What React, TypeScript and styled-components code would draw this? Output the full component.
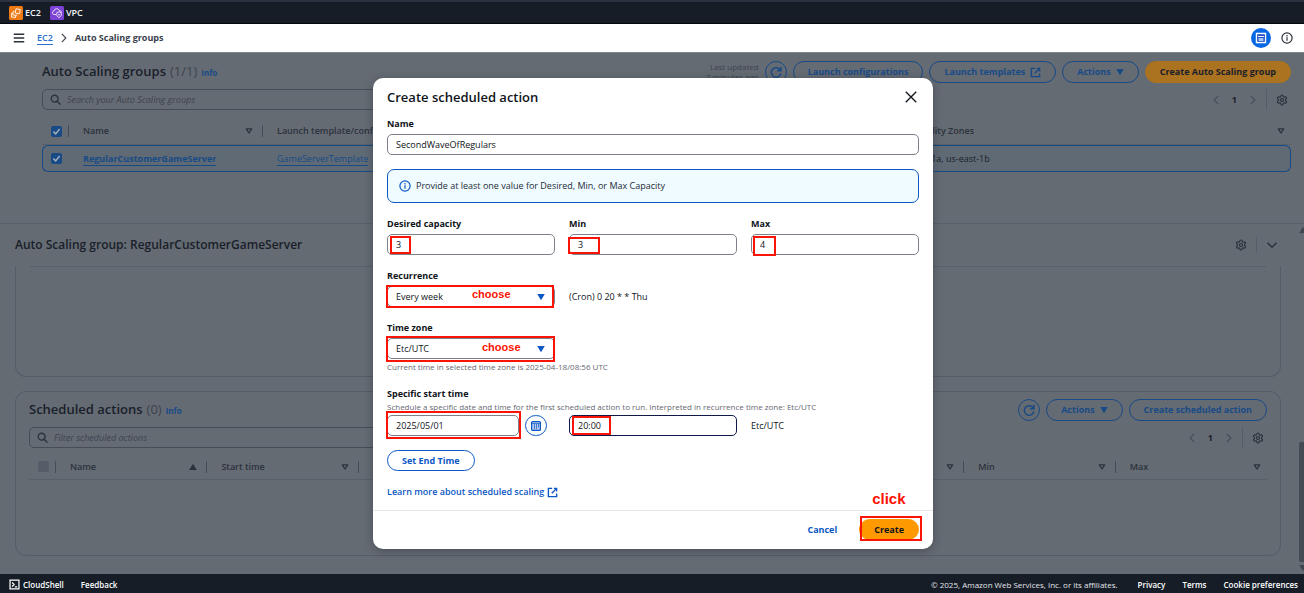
import React from "react";
import styled, { createGlobalStyle, css } from "styled-components";
import { Settings } from "lucide-react";

const dim = {
  surface: "#656b73",
  text: "#19202a",
  soft: "#2b323d",
  muted: "#3c434e",
  blue: "#184a86",
  orange: "#ab7220",
  border: "#464d58",
  line: "#596069",
  card: "#565c68",
};

const lit = {
  text: "#0f141a",
  muted: "#656871",
  blue: "#0b57c4",
  border: "#7d818b",
  line: "#e6e7ea",
  orange: "#ff9900",
  red: "#fa1405",
};

const GlobalStyle = createGlobalStyle`
  *, *::before, *::after { box-sizing: border-box; }
  body { margin: 0; background: ${dim.surface}; }
  body, button, input, select {
    font-family: "Open Sans", "Noto Sans", sans-serif;
    font-size: 9px;
    font-weight: 500;
    line-height: 14px;
    color: ${dim.text};
  }
  h1, h2, h3, p { margin: 0; font-weight: 500; }
  svg { display: block; flex: none; }
`;

/* ---------- page frame ---------- */

const Screen = styled.div`
  display: flex;
  flex-direction: column;
  min-height: 100vh;
`;

const ServiceBar = styled.header`
  display: flex;
  align-items: center;
  gap: 9px;
  height: 24px;
  padding: 0 9px;
  border-top: 2px solid #2a333f;
  border-bottom: 1px solid #05070b;
  background: #161d27;
`;

const ServiceLink = styled.a`
  display: flex;
  align-items: center;
  gap: 2px;
  color: #f3f3f7;
  font-weight: 600;
  text-decoration: none;
`;

const CrumbBar = styled.nav`
  display: flex;
  align-items: center;
  height: 28px;
  padding: 0 11px 0 13px;
  background: #fff;
`;

const Crumbs = styled.ol`
  display: flex;
  flex: 1;
  align-items: center;
  gap: 6px;
  margin: 0;
  padding: 0 0 0 12px;
  list-style: none;
  font-weight: 700;
  color: #3a414c;
  li { display: flex; align-items: center; }
  a {
    color: #2a6fd0;
    font-weight: 600;
    text-decoration: none;
    border-bottom: 1px solid #2a6fd0;
    line-height: 13px;
  }
`;

const IconButton = styled.button<{ $color?: string }>`
  display: flex;
  align-items: center;
  justify-content: center;
  padding: 0;
  border: 0;
  background: none;
  color: ${(p) => p.$color ?? dim.soft};
`;

const PanelToggle = styled(IconButton)`
  width: 20px;
  height: 20px;
  margin-right: 10px;
  border-radius: 50%;
  background: #0868e4;
`;

const Stage = styled.div`
  position: relative;
  display: flex;
  flex: 1;
  flex-direction: column;
  border-top: 1px solid #80858c;
  background: ${dim.surface};
`;

const FooterBar = styled.footer`
  display: flex;
  align-items: center;
  gap: 17px;
  height: 19px;
  padding: 2px 6px 0 9px;
  background: #161d27;
  color: #e4e6ea;
  font-size: 8px;
  a {
    display: flex;
    align-items: center;
    gap: 3px;
    color: #fff;
    font-weight: 600;
    text-decoration: none;
  }
  p { margin: 0 3px 0 auto; }
`;

/* ---------- dimmed page ---------- */

const Groups = styled.section`
  padding: 8px 13px 51px 42px;
`;

const HeadRow = styled.div`
  display: flex;
  align-items: center;
  gap: 6px;
  height: 22px;
`;

const Title = styled.h2`
  display: flex;
  align-items: baseline;
  gap: 4px;
  margin-right: auto;
  font-size: 13px;
  font-weight: 600;
  line-height: 20px;
  span { font-weight: 400; color: ${dim.muted}; }
  a {
    color: ${dim.blue};
    font-size: 8px;
    font-weight: 700;
    text-decoration: none;
  }
`;

const Updated = styled.p`
  color: ${dim.muted};
  font-size: 8px;
  line-height: 10px;
  text-align: right;
`;

const pill = css`
  display: flex;
  align-items: center;
  justify-content: center;
  gap: 5px;
  height: 22px;
  padding: 0 14px;
  border: 1px solid currentColor;
  border-radius: 11px;
  background: none;
  font-weight: 700;
  white-space: nowrap;
`;

const Pill = styled.button<{ $round?: boolean; $solid?: boolean }>`
  ${pill}
  color: ${dim.blue};
  ${(p) => p.$round && css`width: 22px; padding: 0;`}
  ${(p) => p.$solid && css`
    border-color: ${dim.orange};
    background: ${dim.orange};
    color: ${dim.text};
  `}
`;

const ToolRow = styled.div`
  display: flex;
  align-items: center;
  justify-content: space-between;
  height: 21px;
  margin-top: 6px;
`;

const Search = styled.label`
  display: flex;
  flex: 0 0 50%;
  align-items: center;
  gap: 6px;
  height: 21px;
  padding: 0 7px;
  border: 1px solid ${dim.border};
  border-radius: 5px;
  color: ${dim.soft};
  input {
    flex: 1;
    min-width: 0;
    padding: 0;
    border: 0;
    outline: 0;
    background: none;
  }
  input::placeholder {
    color: ${dim.muted};
    font-style: italic;
    opacity: 1;
  }
`;

const Pager = styled.div`
  display: flex;
  align-items: center;
  gap: 11px;
  padding-right: 3px;
  color: ${dim.border};
  b { font-weight: 700; color: ${dim.text}; }
`;

const PagerEnd = styled.div`
  display: flex;
  align-items: center;
  height: 21px;
  margin-left: -3px;
  padding-left: 9px;
  border-left: 1px solid ${dim.card};
`;

const Table = styled.table`
  width: 100%;
  margin-top: 6px;
  border-collapse: separate;
  border-spacing: 0;
  table-layout: fixed;
  th, td {
    padding: 0 9px 0 0;
    overflow: hidden;
    text-align: left;
    white-space: nowrap;
  }
  th {
    height: 26px;
    border-bottom: 1px solid ${dim.line};
    color: ${dim.soft};
    font-weight: 600;
  }
  td a { color: ${dim.blue}; border-bottom: 1px solid ${dim.blue}; text-decoration: none; }
`;

const GroupsTable = styled(Table)`
  margin-top: 8px;
  th { height: 27px; }
  td {
    height: 27px;
    padding-left: 14px;
    border-top: 1px solid ${dim.blue};
    border-bottom: 1px solid ${dim.blue};
    background: #606a75;
  }
  td:first-child {
    padding-left: 8px;
    border-left: 1px solid ${dim.blue};
    border-radius: 6px 0 0 6px;
  }
  td:last-child {
    border-right: 1px solid ${dim.blue};
    border-radius: 0 6px 6px 0;
  }
`;

const HeadCell = styled.div<{ $last?: boolean; $pick?: boolean }>`
  display: flex;
  align-items: center;
  justify-content: space-between;
  height: 12px;
  margin-right: -9px;
  padding: 0 9px 0 14px;
  border-right: 1px solid ${(p) => (p.$last ? "transparent" : dim.border)};
  ${(p) => p.$pick && css`padding: 0 0 0 9px;`}
  ${(p) => p.$last && css`padding-right: 5px;`}
`;

const Check = styled.input`
  appearance: none;
  display: block;
  width: 11px;
  height: 11px;
  margin: 0;
  border-radius: 2px;
  background: ${dim.card};
  &:checked {
    background: ${dim.blue};
  }
`;

const CheckWrap = styled.label`
  position: relative;
  display: block;
  width: 11px;
  svg { position: absolute; inset: 0; }
`;

const Split = styled.section`
  display: flex;
  flex: 1;
  border-top: 1px solid ${dim.line};
`;

const SplitBody = styled.div`
  display: flex;
  flex: 1;
  flex-direction: column;
  min-width: 0;
  padding: 0 18px 18px 15px;
`;

const SplitHead = styled.div`
  display: flex;
  align-items: center;
  gap: 9px;
  height: 42px;
  padding-right: 3px;
  h2 { flex: 1; font-size: 12px; font-weight: 600; line-height: 16px; }
`;

const Bar = styled.span`
  width: 1px;
  height: 16px;
  background: ${dim.card};
`;

const EmptyCard = styled.div`
  height: 111px;
  padding: 0 14px;
  border: 1px solid ${dim.card};
  border-top: 0;
  border-radius: 0 0 11px 11px;
  &::before { content: ""; display: block; border-bottom: 1px solid ${dim.line}; }
`;

const ActionsCard = styled.div`
  flex: 1;
  min-height: 120px;
  margin-top: 14px;
  padding: 7px 13px;
  border: 1px solid ${dim.card};
  border-radius: 11px;
`;

const ScrollTrack = styled.div`
  display: flex;
  flex-direction: column;
  justify-content: flex-end;
  gap: 2px;
  width: 5px;
  padding: 2px 0;
  color: #40464f;
  svg:first-child { margin-bottom: auto; }
`;

const ScrollThumb = styled.div`
  height: 120px;
  border-radius: 2px 0 0 2px;
  background: #454b54;
`;

/* ---------- dialog ---------- */

const DialogLayer = styled.div`
  position: absolute;
  inset: 0;
  display: flex;
  align-items: flex-start;
  justify-content: center;
  padding: 25px 0 0 2px;
`;

const Dialog = styled.div`
  width: 560px;
  border-radius: 10px;
  background: #fff;
  color: ${lit.text};
  box-shadow: 0 2px 10px rgba(20, 26, 36, 0.35);
  input, select { color: ${lit.text}; }
`;

const DialogHead = styled.div`
  display: flex;
  align-items: center;
  justify-content: space-between;
  padding: 11px 16px 0 14px;
  h1 { font-size: 13px; font-weight: 600; line-height: 16px; }
`;

const Form = styled.form`
  display: flex;
  flex-direction: column;
  gap: 14px;
  padding: 12px 14px 11px;
`;

const Columns = styled.div`
  display: grid;
  grid-template-columns: repeat(3, 1fr);
  gap: 14px;
`;

const Label = styled.label`
  display: block;
  margin-bottom: 3px;
  font-weight: 700;
`;

const Hint = styled.p`
  padding-top: 2px;
  color: ${lit.muted};
  font-size: 8px;
  line-height: 12px;
`;

const ZoneHint = styled(Hint)`
  margin-top: -14px;
`;

const StartHead = styled.div`
  label { margin: 0; }
  p { padding: 0 0 2px; }
`;

const Control = styled.div`
  position: relative;
`;

const box = css`
  display: block;
  width: 100%;
  height: 21px;
  padding: 0 8px;
  border: 1px solid ${lit.border};
  border-radius: 5px;
  outline: 0;
  background: #fff;
`;

const Input = styled.input<{ $active?: boolean }>`
  ${box}
  ${(p) => p.$active && css`border-color: #10194a;`}
`;

const Select = styled.select`
  ${box}
  appearance: none;
  & + svg {
    position: absolute;
    top: 7px;
    right: 10px;
    color: ${lit.blue};
  }
`;

const Side = styled.span`
  align-self: end;
  padding-bottom: 3px;
`;

const DateRow = styled.div`
  display: grid;
  grid-template-columns: 1fr 22px;
  gap: 6px;
  padding-right: 8px;
`;

const Notice = styled.div`
  display: flex;
  align-items: center;
  gap: 5px;
  height: 34px;
  padding: 0 11px;
  border: 1px solid ${lit.blue};
  border-radius: 7px;
  background: #f0fbff;
  color: #232b37;
  svg { color: ${lit.blue}; }
`;

const DialogButton = styled.button<{ $kind?: "primary" | "link" }>`
  ${pill}
  height: 21px;
  color: ${lit.blue};
  ${(p) => p.$kind === "link" && css`border-color: transparent;`}
  ${(p) => p.$kind === "primary" && css`
    border-color: ${lit.orange};
    background: ${lit.orange};
    color: ${lit.text};
  `}
`;

const RoundButton = styled(DialogButton)`
  width: 22px;
  padding: 0;
`;

const FormLine = styled.div`
  display: flex;
  a {
    display: flex;
    align-items: center;
    gap: 3px;
    color: ${lit.blue};
    font-weight: 600;
    text-decoration: none;
  }
`;

const DialogFoot = styled.div`
  display: flex;
  justify-content: flex-end;
  gap: 7px;
  padding: 8px 14px 9px;
  border-top: 1px solid ${lit.line};
`;

/* ---------- red tutorial marks ---------- */

const Mark = styled.span<{ $t: number; $l: number; $w: number; $h: number }>`
  position: absolute;
  top: ${(p) => p.$t}px;
  left: ${(p) => p.$l}px;
  width: ${(p) => p.$w}px;
  height: ${(p) => p.$h}px;
  border: 2px solid ${lit.red};
  pointer-events: none;
`;

const Note = styled.span<{ $t: number; $l: number; $size?: number }>`
  position: absolute;
  top: ${(p) => p.$t}px;
  left: ${(p) => p.$l}px;
  color: ${lit.red};
  font: 700 ${(p) => p.$size ?? 11}px/14px "Liberation Sans", Arial, sans-serif;
  pointer-events: none;
`;

/* ---------- icons ---------- */

const Line = ({ d, size = 11, w = 2, color = "currentColor" }: { d: string; size?: number; w?: number; color?: string }) => (
  <svg width={size} height={size} viewBox="0 0 16 16" fill="none" stroke={color} strokeWidth={w} aria-hidden="true">
    <path d={d} />
  </svg>
);

const External = () => <Line d="M10 2h4v4.5M7 9l7-7M7.5 2H2v12h12V9.5" />;
const Refresh = () => <Line size={12} d="M14.6 1v5.2H9.4M13.9 5.8A6.4 6.4 0 1 0 14.4 10" />;
const SearchIcon = () => <Line size={11} d="M11.8 6.8a5 5 0 1 1-10 0 5 5 0 0 1 10 0ZM10.4 10.4l4.8 4.8" />;
const Left = () => <Line size={10} w={1.8} d="M11.5 1.5 5 8l6.5 6.5" />;
const Right = () => <Line size={10} w={1.8} d="M4.5 1.5 11 8l-6.5 6.5" />;
const Info = () => <Line size={12} d="M14.8 8a6.8 6.8 0 1 1-13.6 0 6.8 6.8 0 0 1 13.6 0ZM8 7v4.800M8 4v1.900" w={1.6} />;

const Tri = ({ up, hollow }: { up?: boolean; hollow?: boolean }) => (
  <svg width="8" height="8" viewBox="0 0 8 8" aria-hidden="true">
    <path
      d={hollow ? "M1.3 1.9h5.4L4 6Z" : up ? "M4 .8 7.8 7H.2Z" : "M.2 1h7.6L4 7.2Z"}
      fill={hollow ? "none" : "currentColor"}
      stroke={hollow ? "currentColor" : "none"}
      strokeWidth="1.2"
      strokeLinejoin="round"
    />
  </svg>
);

const Ec2Logo = () => (
  <svg width="14" height="14" viewBox="0 0 28 28" aria-hidden="true">
    <rect width="28" height="28" rx="3" fill="#ed7a14" />
    <g fill="none" stroke="#fff" strokeWidth="1.800" strokeLinejoin="round">
      <path d="M14 5.500l8.500 1.500-1.500 8.500-8.500-1.500zM11 11l-2.500-.3-1 7 7.500 1.300.6-2M7.800 14.500l-2.300-.2L5 22l8 1 .4-3.500" />
    </g>
  </svg>
);

const VpcLogo = () => (
  <svg width="14" height="14" viewBox="0 0 28 28" aria-hidden="true">
    <rect width="28" height="28" rx="3" fill="#7d43d8" />
    <g fill="none" stroke="#fff" strokeWidth="1.7" strokeLinejoin="round">
      <path d="M12 17H8.5C6.3 17 5 15.500 5 13.500s1.400-3.400 3.200-3.500C8.600 7.200 10.800 5.500 13.500 5.500c2.600 0 4.300 1.500 5 3.600 2.300-.1 3.900 1.300 4 3.400" />
      <path d="m18 11.500 4.500 1.800v4c0 2.600-1.800 4.400-4.500 5.700-2.700-1.300-4.500-3.100-4.500-5.700v-4ZM16 17.500h4" />
    </g>
  </svg>
);

const PanelIcon = () => (
  <svg width="12" height="12" viewBox="0 0 12 12" aria-hidden="true">
    <path d="M1.500 1.500h9v9h-9z" fill="#0b3fc0" stroke="#fff" strokeWidth="1.400" />
    <path d="M3 4.500h6" stroke="#fff" strokeWidth="1.200" />
    <path d="M3.500 6h5v3h-5z" fill="#a9c6f7" />
  </svg>
);

const CalendarIcon = () => (
  <svg width="10" height="10" viewBox="0 0 10 10" aria-hidden="true">
    <rect x=".6" y=".6" width="8.800" height="8.800" rx="1" fill="#b9caf0" stroke="currentColor" strokeWidth="1.200" />
    <path d="M1 2.500h8M3.500 3v5M5.500 3v5M7.500 3v3.500" stroke="currentColor" strokeWidth=".7" />
  </svg>
);

const Gear = () => <Settings size={12} strokeWidth={2.4} aria-hidden="true" />;

const Tick = () => <Line size={11} w={2.2} color="#a4adb8" d="M3.5 8.2 6.8 11.5 12.5 4.5" />;

/* ---------- composed parts ---------- */

const PagerBlock = () => (
  <Pager>
    <IconButton $color={dim.border} aria-label="Previous page"><Left /></IconButton>
    <b>1</b>
    <IconButton $color={dim.border} aria-label="Next page"><Right /></IconButton>
    <PagerEnd>
      <IconButton aria-label="Preferences"><Gear /></IconButton>
    </PagerEnd>
  </Pager>
);

const PickBox = ({ label, on }: { label: string; on?: boolean }) => (
  <CheckWrap>
    <Check type="checkbox" aria-label={label} defaultChecked={on} disabled={!on} />
    {on && <Tick />}
  </CheckWrap>
);

const groupColumns: [string, number | undefined][] = [
  ["Name", 194],
  ["Launch template/configuration", 194],
  ["Instances", 90],
  ["Status", 80],
  ["Desired capacity", 121],
  ["Min", 68],
  ["Max", 68],
  ["Availability Zones", undefined],
];

const actionColumns = ["Name", "Start time", "End time", "Recurrence", "Time zone", "Desired capacity", "Min", "Max"];

const AutoScalingGroups = () => (
  <Groups>
    <HeadRow>
      <Title>Auto Scaling groups <span>(1/1)</span> <a href="#info">Info</a></Title>
      <Updated>Last updated<br />2 minutes ago</Updated>
      <Pill $round aria-label="Refresh"><Refresh /></Pill>
      <Pill>Launch configurations</Pill>
      <Pill>Launch templates <External /></Pill>
      <Pill>Actions <Tri /></Pill>
      <Pill $solid>Create Auto Scaling group</Pill>
    </HeadRow>
    <ToolRow>
      <Search>
        <SearchIcon />
        <input type="search" placeholder="Search your Auto Scaling groups" aria-label="Search your Auto Scaling groups" />
      </Search>
      <PagerBlock />
    </ToolRow>
    <GroupsTable>
      <colgroup>
        <col width={27} />
        {groupColumns.map(([name, width]) => <col key={name} width={width} />)}
      </colgroup>
      <thead>
        <tr>
          <th><HeadCell $pick><PickBox label="Select all groups" on /></HeadCell></th>
          {groupColumns.map(([name], i) => (
            <th key={name}>
              <HeadCell $last={i === groupColumns.length - 1}>{name}<Tri hollow /></HeadCell>
            </th>
          ))}
        </tr>
      </thead>
      <tbody>
        <tr>
          <td><PickBox label="Select RegularCustomerGameServer" on /></td>
          <td><a href="#group"><b>RegularCustomerGameServer</b></a></td>
          <td><a href="#template">GameServerTemplate</a></td>
          <td />
          <td />
          <td />
          <td />
          <td />
          <td>us-east-1a, us-east-1b</td>
        </tr>
      </tbody>
    </GroupsTable>
  </Groups>
);

const GroupDetails = () => (
  <Split>
    <SplitBody>
      <SplitHead>
        <h2>Auto Scaling group: RegularCustomerGameServer</h2>
        <IconButton aria-label="Panel preferences"><Gear /></IconButton>
        <Bar />
        <IconButton aria-label="Collapse panel"><Line size={12} d="M2 5l6 6 6-6" /></IconButton>
      </SplitHead>
      <EmptyCard />
      <ActionsCard>
        <HeadRow>
          <Title>Scheduled actions <span>(0)</span> <a href="#info">Info</a></Title>
          <Pill $round aria-label="Refresh scheduled actions"><Refresh /></Pill>
          <Pill>Actions <Tri /></Pill>
          <Pill>Create scheduled action</Pill>
        </HeadRow>
        <ToolRow>
          <Search>
            <SearchIcon />
            <input type="search" placeholder="Filter scheduled actions" aria-label="Filter scheduled actions" />
          </Search>
          <PagerBlock />
        </ToolRow>
        <Table>
          <colgroup>
            <col width={27} />
            {actionColumns.map((name) => <col key={name} />)}
          </colgroup>
          <thead>
            <tr>
              <th><HeadCell $pick><PickBox label="Select all actions" /></HeadCell></th>
              {actionColumns.map((name, i) => (
                <th key={name}>
                  <HeadCell $last={i === actionColumns.length - 1}>{name}<Tri up={i === 0} hollow={i > 0} /></HeadCell>
                </th>
              ))}
            </tr>
          </thead>
        </Table>
      </ActionsCard>
    </SplitBody>
    <ScrollTrack>
      <Tri up />
      <ScrollThumb />
      <Tri />
    </ScrollTrack>
  </Split>
);

const ScheduledActionDialog = () => (
  <DialogLayer>
    <Dialog role="dialog" aria-labelledby="dialog-title">
      <DialogHead>
        <h1 id="dialog-title">Create scheduled action</h1>
        <IconButton $color={lit.text} aria-label="Close"><Line size={12} w={1.8} d="M1 1l14 14M15 1 1 15" /></IconButton>
      </DialogHead>
      <Form onSubmit={(e) => e.preventDefault()}>
        <div>
          <Label htmlFor="name">Name</Label>
          <Input id="name" defaultValue="SecondWaveOfRegulars" />
        </div>
        <Notice><Info />Provide at least one value for Desired, Min, or Max Capacity</Notice>
        <Columns>
          <div>
            <Label htmlFor="desired">Desired capacity</Label>
            <Control>
              <Input id="desired" defaultValue="3" />
              <Mark $t={2} $l={3} $w={21} $h={18} />
            </Control>
          </div>
          <div>
            <Label htmlFor="min">Min</Label>
            <Control>
              <Input id="min" defaultValue="3" />
              <Mark $t={3} $l={-1} $w={32} $h={17} />
            </Control>
          </div>
          <div>
            <Label htmlFor="max">Max</Label>
            <Control>
              <Input id="max" defaultValue="4" />
              <Mark $t={2} $l={2} $w={23} $h={20} />
            </Control>
          </div>
        </Columns>
        <Columns>
          <div>
            <Label htmlFor="recurrence">Recurrence</Label>
            <Control>
              <Select id="recurrence"><option>Every week</option></Select>
              <Tri />
              <Mark $t={-1} $l={-1} $w={168} $h={23} />
              <Note $t={1} $l={85}>choose</Note>
            </Control>
          </div>
          <Side>(Cron) 0 20 * * Thu</Side>
        </Columns>
        <Columns>
          <div>
            <Label htmlFor="zone">Time zone</Label>
            <Control>
              <Select id="zone"><option>Etc/UTC</option></Select>
              <Tri />
              <Mark $t={-2} $l={-1} $w={169} $h={26} />
              <Note $t={2} $l={95}>choose</Note>
            </Control>
          </div>
        </Columns>
        <ZoneHint>Current time in selected time zone is 2025-04-18/08:56 UTC</ZoneHint>
        <div>
          <StartHead>
            <Label htmlFor="date">Specific start time</Label>
            <Hint>Schedule a specific date and time for the first scheduled action to run. Interpreted in recurrence time zone: Etc/UTC</Hint>
          </StartHead>
          <Columns>
            <DateRow>
              <Control>
                <Input id="date" defaultValue="2025/05/01" />
                <Mark $t={-4} $l={-1} $w={135} $h={28} />
              </Control>
              <RoundButton type="button" aria-label="Choose date"><CalendarIcon /></RoundButton>
            </DateRow>
            <Control>
              <Input id="time" aria-label="Start time" $active defaultValue="20:00" />
              <Mark $t={1} $l={3} $w={39} $h={19} />
            </Control>
            <Side>Etc/UTC</Side>
          </Columns>
        </div>
        <FormLine><DialogButton type="button">Set End Time</DialogButton></FormLine>
        <FormLine><a href="#scaling">Learn more about scheduled scaling <External /></a></FormLine>
      </Form>
      <DialogFoot>
        <DialogButton $kind="link">Cancel</DialogButton>
        <Control>
          <DialogButton $kind="primary">Create</DialogButton>
          <Mark $t={-3} $l={1} $w={62} $h={25} />
          <Note $t={-27} $l={13} $size={15}>click</Note>
        </Control>
      </DialogFoot>
    </Dialog>
  </DialogLayer>
);

export default function App() {
  return (
    <Screen>
      <GlobalStyle />
      <ServiceBar>
        <ServiceLink href="#ec2"><Ec2Logo />EC2</ServiceLink>
        <ServiceLink href="#vpc"><VpcLogo />VPC</ServiceLink>
      </ServiceBar>
      <CrumbBar>
        <IconButton aria-label="Open navigation"><Line size={12} d="M1 3h14M1 8h14M1 13h14" /></IconButton>
        <Crumbs>
          <li><a href="#ec2">EC2</a></li>
          <li aria-hidden="true"><Right /></li>
          <li>Auto Scaling groups</li>
        </Crumbs>
        <PanelToggle aria-label="Toggle split panel"><PanelIcon /></PanelToggle>
        <IconButton aria-label="Information"><Info /></IconButton>
      </CrumbBar>
      <Stage>
        <AutoScalingGroups />
        <GroupDetails />
        <ScheduledActionDialog />
      </Stage>
      <FooterBar>
        <a href="#shell">
          <Line size={11} w={1.8} d="M1.5 1.5h13v13h-13zM4.5 5l3 3-3 3M8.5 11.5H12" />
          CloudShell
        </a>
        <a href="#feedback">Feedback</a>
        <p>© 2025, Amazon Web Services, Inc. or its affiliates.</p>
        <a href="#privacy">Privacy</a>
        <a href="#terms">Terms</a>
        <a href="#cookies">Cookie preferences</a>
      </FooterBar>
    </Screen>
  );
}
